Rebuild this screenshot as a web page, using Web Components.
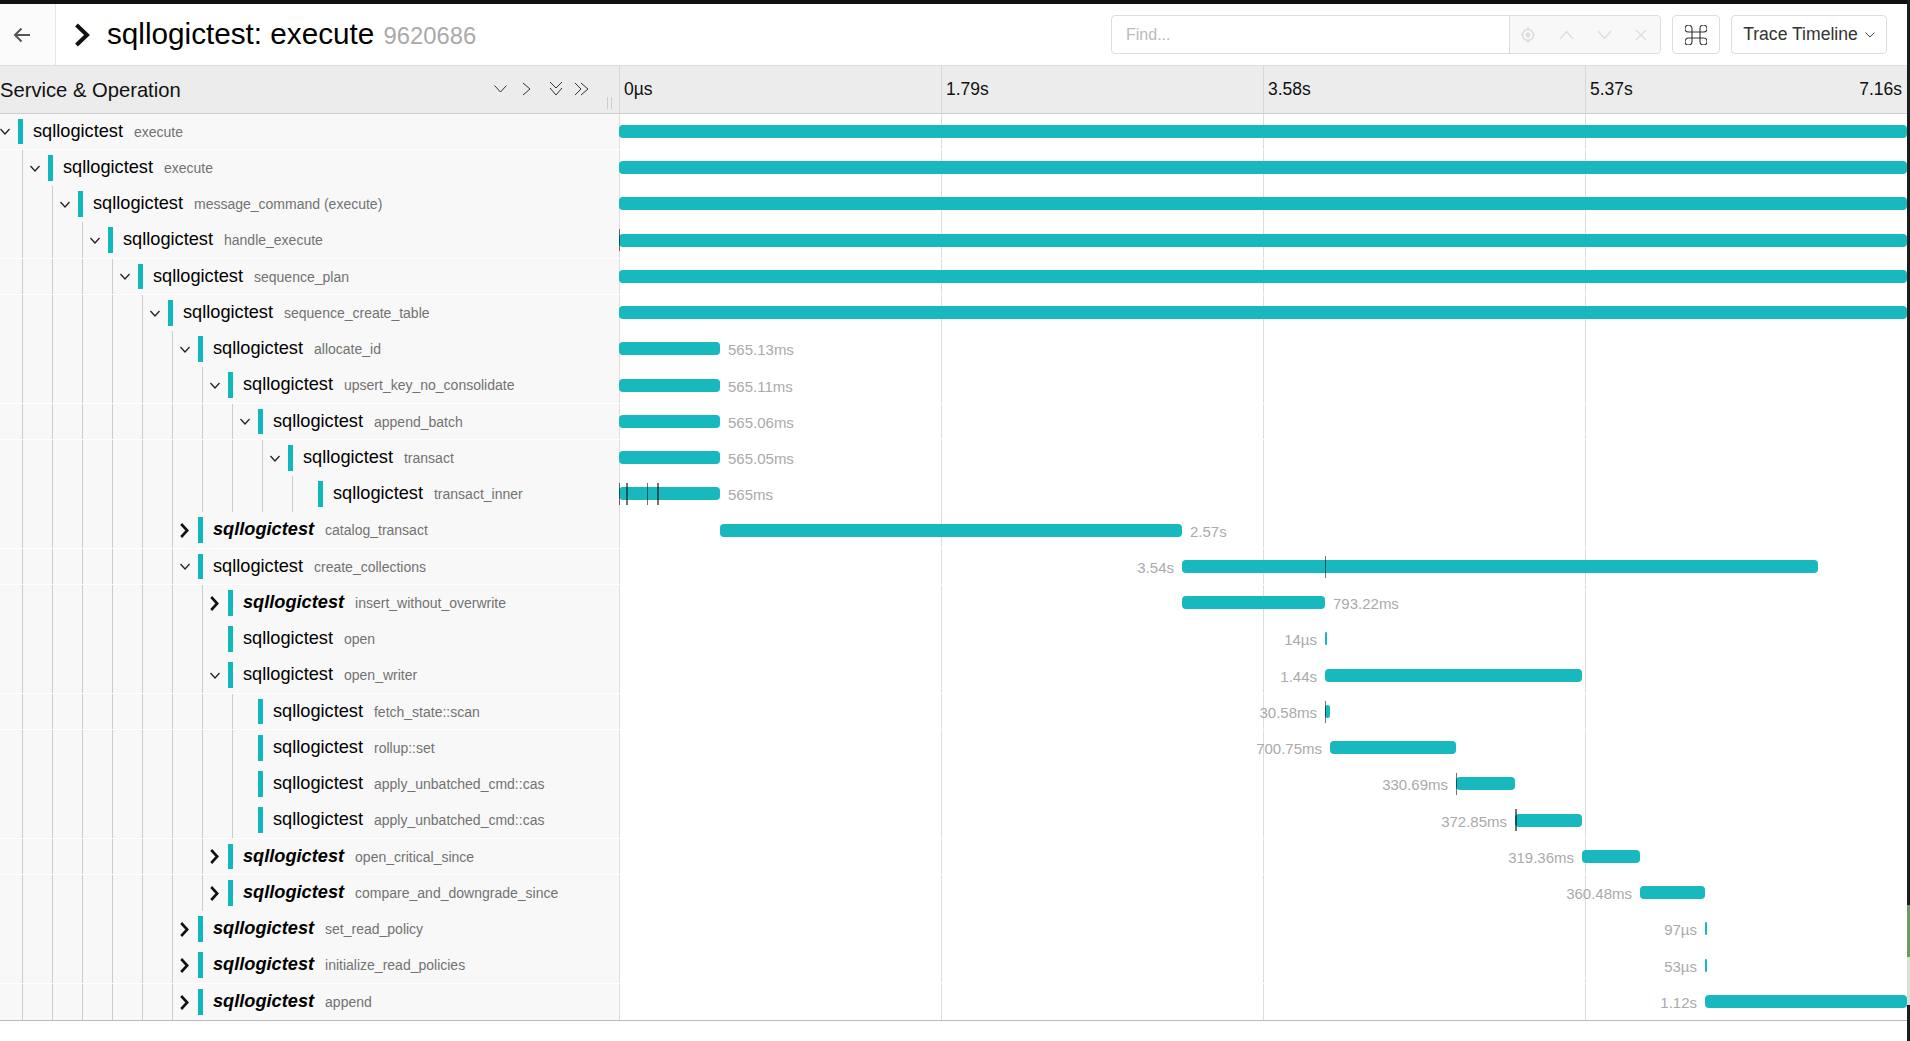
<!DOCTYPE html>
<html>
<head>
<meta charset="utf-8">
<title>sqllogictest: execute</title>
<style>
  html, body { margin: 0; height: 100%; overflow: hidden; background: #fff; }
  body { font-family: "Liberation Sans", Arial, sans-serif; }
</style>
</head>
<body>
<trace-page>
  <trace-header trace-name="sqllogictest: execute" trace-id="9620686"></trace-header>
  <trace-columns></trace-columns>

  <span-row depth="0" state="open" line start="619" end="1907">execute</span-row>
  <span-row depth="1" state="open" start="619" end="1907">execute</span-row>
  <span-row depth="2" state="open" start="619" end="1907">message_command (execute)</span-row>
  <span-row depth="3" state="open" line tall start="619" end="1907" marks="619">handle_execute</span-row>
  <span-row depth="4" state="open" line start="619" end="1907">sequence_plan</span-row>
  <span-row depth="5" state="open" start="619" end="1907">sequence_create_table</span-row>
  <span-row depth="6" state="open" start="619" end="720" dur="565.13ms">allocate_id</span-row>
  <span-row depth="7" state="open" line tall start="619" end="720" dur="565.11ms">upsert_key_no_consolidate</span-row>
  <span-row depth="8" state="open" line start="619" end="720" dur="565.06ms">append_batch</span-row>
  <span-row depth="9" state="open" start="619" end="720" dur="565.05ms">transact</span-row>
  <span-row depth="10" state="leaf" start="619" end="720" dur="565ms" marks="619,626:2,647,657:2">transact_inner</span-row>
  <span-row depth="6" state="closed" line tall start="720" end="1182" dur="2.57s">catalog_transact</span-row>
  <span-row depth="6" state="open" line start="1182" end="1818" dur="3.54s" side="left" marks="1325">create_collections</span-row>
  <span-row depth="7" state="closed" start="1182" end="1325" dur="793.22ms">insert_without_overwrite</span-row>
  <span-row depth="7" state="leaf" start="1325" end="1327" dur="14µs" side="left">open</span-row>
  <span-row depth="7" state="open" line tall start="1325" end="1582" dur="1.44s" side="left">open_writer</span-row>
  <span-row depth="8" state="leaf" line start="1325" end="1330" dur="30.58ms" side="left" marks="1325">fetch_state::scan</span-row>
  <span-row depth="8" state="leaf" start="1330" end="1456" dur="700.75ms" side="left">rollup::set</span-row>
  <span-row depth="8" state="leaf" start="1456" end="1515" dur="330.69ms" side="left" marks="1456">apply_unbatched_cmd::cas</span-row>
  <span-row depth="8" state="leaf" line tall start="1515" end="1582" dur="372.85ms" side="left" marks="1515:2">apply_unbatched_cmd::cas</span-row>
  <span-row depth="7" state="closed" line start="1582" end="1640" dur="319.36ms" side="left">open_critical_since</span-row>
  <span-row depth="7" state="closed" start="1640" end="1705" dur="360.48ms" side="left">compare_and_downgrade_since</span-row>
  <span-row depth="6" state="closed" start="1705" end="1707" dur="97µs" side="left">set_read_policy</span-row>
  <span-row depth="6" state="closed" line tall start="1705" end="1707" dur="53µs" side="left">initialize_read_policies</span-row>
  <span-row depth="6" state="closed" start="1705" end="1907" dur="1.12s" side="left">append</span-row>
</trace-page>

<script>
// Outer frame: dark edge of the captured window, then the page column
class TracePage extends HTMLElement {
  constructor() {
    super();
    this.attachShadow({ mode: 'open' });
    this.shadowRoot.innerHTML = `
      <style>
        :host { display: flex; width: 1910px; height: 1041px; overflow: hidden; }
        .main { width: 1907px; flex: none; display: flex; flex-direction: column; }
        .top { height: 4px; flex: none; background: #111; }
        .rows { border-bottom: 1px solid #bbb; }
        .edge { flex: 1; background: #1c1c1c; display: flex; flex-direction: column; }
        .edge i { display: block; }
        .edge .a { height: 905px; }
        .edge .b { height: 52px; background: #6d9a62; }
        .edge .c { height: 48px; background: #d6e2d2; }
      </style>
      <div class="main">
        <div class="top"></div>
        <div class="rows"><slot></slot></div>
      </div>
      <div class="edge"><i class="a"></i><i class="b"></i><i class="c"></i></div>
    `;
  }
}
customElements.define('trace-page', TracePage);

class TraceHeader extends HTMLElement {
  constructor() {
    super();
    this.attachShadow({ mode: 'open' });
    this.shadowRoot.innerHTML = `
      <style>
        :host { display: flex; align-items: stretch; height: 62px; box-sizing: border-box; border-bottom: 1px solid #ddd; background: #fff; color: #000; }
        .back { width: 56px; flex: none; box-sizing: border-box; padding-right: 12px; border-right: 1px solid #e4e4e4; background: #fbfbfb; display: flex; align-items: center; justify-content: center; }
        .title { flex: 1; display: flex; align-items: center; padding-left: 18px; min-width: 0; }
        .title svg { margin-right: 17px; flex: none; }
        h1 { margin: 0 0 2px; font: 400 29.7px "Liberation Sans", Arial, sans-serif; white-space: nowrap; }
        h1 small { font-size: 23.8px; color: #aaa; margin-left: 1px; }
        .tools { display: flex; align-items: center; padding-right: 20px; }
        .find { width: 550px; height: 39px; box-sizing: border-box; border: 1px solid #ddd; border-radius: 4px; display: flex; margin-right: 11px; }
        .find span { flex: 1; padding-left: 14px; font-size: 16px; line-height: 37px; color: #bbb; }
        .suffix { width: 151px; flex: none; padding-left: 10px; background: #f8f8f8; border-left: 1px solid #ddd; border-radius: 0 4px 4px 0; display: flex; align-items: center; gap: 23px; box-sizing: border-box; }
        .suffix svg { display: block; flex: none; }
        .btn { height: 39px; box-sizing: border-box; border: 1px solid #ddd; border-radius: 4px; display: flex; align-items: center; justify-content: center; background: #fff; }
        .kbd { width: 48px; margin-right: 11px; }
        .view { width: 156px; font-size: 17.6px; color: #333; }
        .view svg { margin-left: 7px; }
      </style>
      <div class="back">
        <svg width="20" height="20" viewBox="0 0 20 20" fill="none" stroke="#555" stroke-width="2"><path d="M18 10H3M9.500 3.500 3 10l6.500 6.500"/></svg>
      </div>
      <div class="title">
        <svg width="16" height="24" viewBox="0 0 16 24" fill="none" stroke="#111" stroke-width="4"><path d="M2.500 2 13 12 2.500 22"/></svg>
        <h1>${this.getAttribute('trace-name')} <small>${this.getAttribute('trace-id')}</small></h1>
      </div>
      <div class="tools">
        <div class="find">
          <span>Find...</span>
          <div class="suffix">
            <svg width="16" height="18" viewBox="0 0 16 18" fill="none" stroke="#ddd" stroke-width="1.5"><circle cx="8" cy="9" r="5.500"/><circle cx="8" cy="9" r="2.400" fill="#ddd" stroke="none"/><path d="M8 1v2.500M8 14.500V17M1 9h1.500M13.500 9H15"/></svg>
            <svg width="15" height="10" viewBox="0 0 15 10" fill="none" stroke="#ddd" stroke-width="1.3"><path d="M1 9 7.500 1.500 14 9"/></svg>
            <svg width="15" height="10" viewBox="0 0 15 10" fill="none" stroke="#ddd" stroke-width="1.3"><path d="M1 1l6.500 7.500L14 1"/></svg>
            <svg width="12" height="12" viewBox="0 0 12 12" fill="none" stroke="#ddd" stroke-width="1.3"><path d="M1 1l10 10M11 1 1 11"/></svg>
          </div>
        </div>
        <div class="btn kbd">
          <svg width="22" height="20" viewBox="0 0 22 20" fill="none" stroke="#333" stroke-width="1.1"><path d="M7 7V3.500A3.500 3.500 0 1 0 3.500 7H18.500A3.500 3.500 0 1 0 15 3.500V16.500A3.500 3.500 0 1 0 18.500 13H3.500A3.500 3.500 0 1 0 7 16.500Z"/></svg>
        </div>
        <div class="btn view">Trace Timeline
          <svg width="10" height="6" viewBox="0 0 10 6" fill="none" stroke="#444" stroke-width="1"><path d="M.5.5 5 5 9.500.5"/></svg>
        </div>
      </div>
    `;
  }
}
customElements.define('trace-header', TraceHeader);

// Column titles and the time ruler
class TraceColumns extends HTMLElement {
  constructor() {
    super();
    this.attachShadow({ mode: 'open' });
    this.shadowRoot.innerHTML = `
      <style>
        :host { display: flex; height: 48px; box-sizing: border-box; border-bottom: 1px solid #ccc; background: #ececec; color: #111; }
        .name { width: 619px; flex: none; display: flex; align-items: center; box-sizing: border-box; padding-right: 7px; }
        .name b { font-weight: 400; font-size: 20.2px; flex: 1; white-space: nowrap; padding-top: 1px; }
        .name svg { flex: none; display: block; margin-bottom: 2px; }
        .grip { flex: none; align-self: flex-end; width: 3px; height: 12px; margin: 0 0 4px 18px; border: solid #ccc; border-width: 0 1px; }
        .ticks { flex: 1; display: grid; grid-template-columns: 322px 322px 322px 322px; font-size: 17.5px; }
        .ticks div { border-left: 1px solid #d8d8d8; padding: 0 5px 1px 4px; display: flex; align-items: center; justify-content: space-between; }
      </style>
      <div class="name">
        <b>Service &amp; Operation</b>
        <svg width="13" height="8" viewBox="0 0 13 8" fill="none" stroke="#333" stroke-width="1"><path d="M.5.5 6.500 7 12.500.5"/></svg>
        <svg style="margin-left:15px" width="9" height="14" viewBox="0 0 9 14" fill="none" stroke="#333" stroke-width="1"><path d="M1 1l7 6-7 6"/></svg>
        <svg style="margin-left:18px" width="14" height="15" viewBox="0 0 14 15" fill="none" stroke="#333" stroke-width="1"><path d="M1 1l6 6 6-6M1 7l6 7 6-7"/></svg>
        <svg style="margin-left:11px" width="15" height="14" viewBox="0 0 15 14" fill="none" stroke="#333" stroke-width="1"><path d="M1 1l6 6-6 6M7 1l7 6-7 6"/></svg>
        <div class="grip"></div>
      </div>
      <div class="ticks">
        <div>0µs</div><div>1.79s</div><div>3.58s</div><div><span>5.37s</span><span>7.16s</span></div>
      </div>
    `;
  }
}
customElements.define('trace-columns', TraceColumns);

const ORIGEN = 619;

class SpanRow extends HTMLElement {
  constructor() {
    super();
    this.attachShadow({ mode: 'open' });

    const depth = Number(this.getAttribute('depth'));
    const state = this.getAttribute('state');
    const start = Number(this.getAttribute('start')) - ORIGEN;
    const end = Number(this.getAttribute('end')) - ORIGEN;
    const dur = this.getAttribute('dur');
    const side = this.getAttribute('side') || 'right';
    const marks = (this.getAttribute('marks') || '').split(',').filter(Boolean);

    let guides = '';
    for (let i = 0; i < depth; i++) guides += '<i class="guide"></i>';

    let toggle = '';
    if (state === 'open') {
      toggle = '<svg width="10" height="7" viewBox="0 0 10 7" fill="none" stroke="#222" stroke-width="1.3"><path d="M.5 1 5 6 9.500 1"/></svg>';
    } else if (state === 'closed') {
      toggle = '<svg width="9" height="15" viewBox="0 0 9 15" fill="none" stroke="#111" stroke-width="2.6"><path d="M1.200 1 7.200 7.500 1.200 14"/></svg>';
    }

    let label = '';
    if (dur) {
      const place = side === 'left' ? `right:${1288 - start + 8}px` : `left:${end + 8}px`;
      label = `<span class="dur" style="${place}">${dur}</span>`;
    }

    const ticks = marks.map(m => {
      const [x, w] = m.split(':');
      return `<i class="mark" style="left:${x - ORIGEN}px;width:${w || 1}px"></i>`;
    }).join('');

    this.shadowRoot.innerHTML = `
      <style>
        :host { display: flex; height: 36px; box-sizing: border-box; background: #fff; }
        :host([tall]) { height: 37px; }
        :host([line]) { border-bottom: 1px solid #fff; }
        .tree { width: 619px; flex: none; display: flex; align-items: stretch; background: #f8f8f8; overflow: hidden; }
        .guide { width: 30px; flex: none; background: linear-gradient(#ccc, #ccc) 22px 0 / 1px 100% no-repeat; }
        .toggle { width: 18px; flex: none; display: flex; align-items: center; }
        .color { width: 5px; flex: none; margin: 5px 10px 5px 0; background: #10b8be; }
        .label { display: flex; align-items: center; white-space: nowrap; padding-bottom: 1px; }
        .svc { font-size: 18.2px; color: #000; margin-right: 11px; }
        :host([state="closed"]) .svc { font-weight: 700; font-style: italic; }
        .op { font-size: 14px; color: #727272; padding-top: 1px; }
        .time { width: 1288px; flex: none; position: relative; overflow: hidden;
          background: linear-gradient(#ddd, #ddd) 0 0 / 1px 100% no-repeat,
                      linear-gradient(#ddd, #ddd) 322px 0 / 1px 100% no-repeat,
                      linear-gradient(#ddd, #ddd) 644px 0 / 1px 100% no-repeat,
                      linear-gradient(#ddd, #ddd) 966px 0 / 1px 100% no-repeat; }
        .bar { position: absolute; top: 11px; height: 13px; background: #17b8be; border-radius: 4px; }
        :host([tall]) .bar { top: 12px; }
        .dur { position: absolute; top: 10px; font-size: 15px; line-height: 17px; color: #aaa; white-space: nowrap; }
        :host([tall]) .dur { top: 11px; }
        .mark { position: absolute; top: 7px; height: 22px; background: rgba(0, 0, 0, .55); }
      </style>
      <div class="tree">
        ${guides}
        <div class="toggle">${toggle}</div>
        <div class="color"></div>
        <div class="label"><span class="svc">sqllogictest</span><span class="op"><slot></slot></span></div>
      </div>
      <div class="time">
        <div class="bar" style="left:${start}px;width:${end - start}px"></div>
        ${ticks}
        ${label}
      </div>
    `;
  }
}
customElements.define('span-row', SpanRow);
</script>
</body>
</html>
